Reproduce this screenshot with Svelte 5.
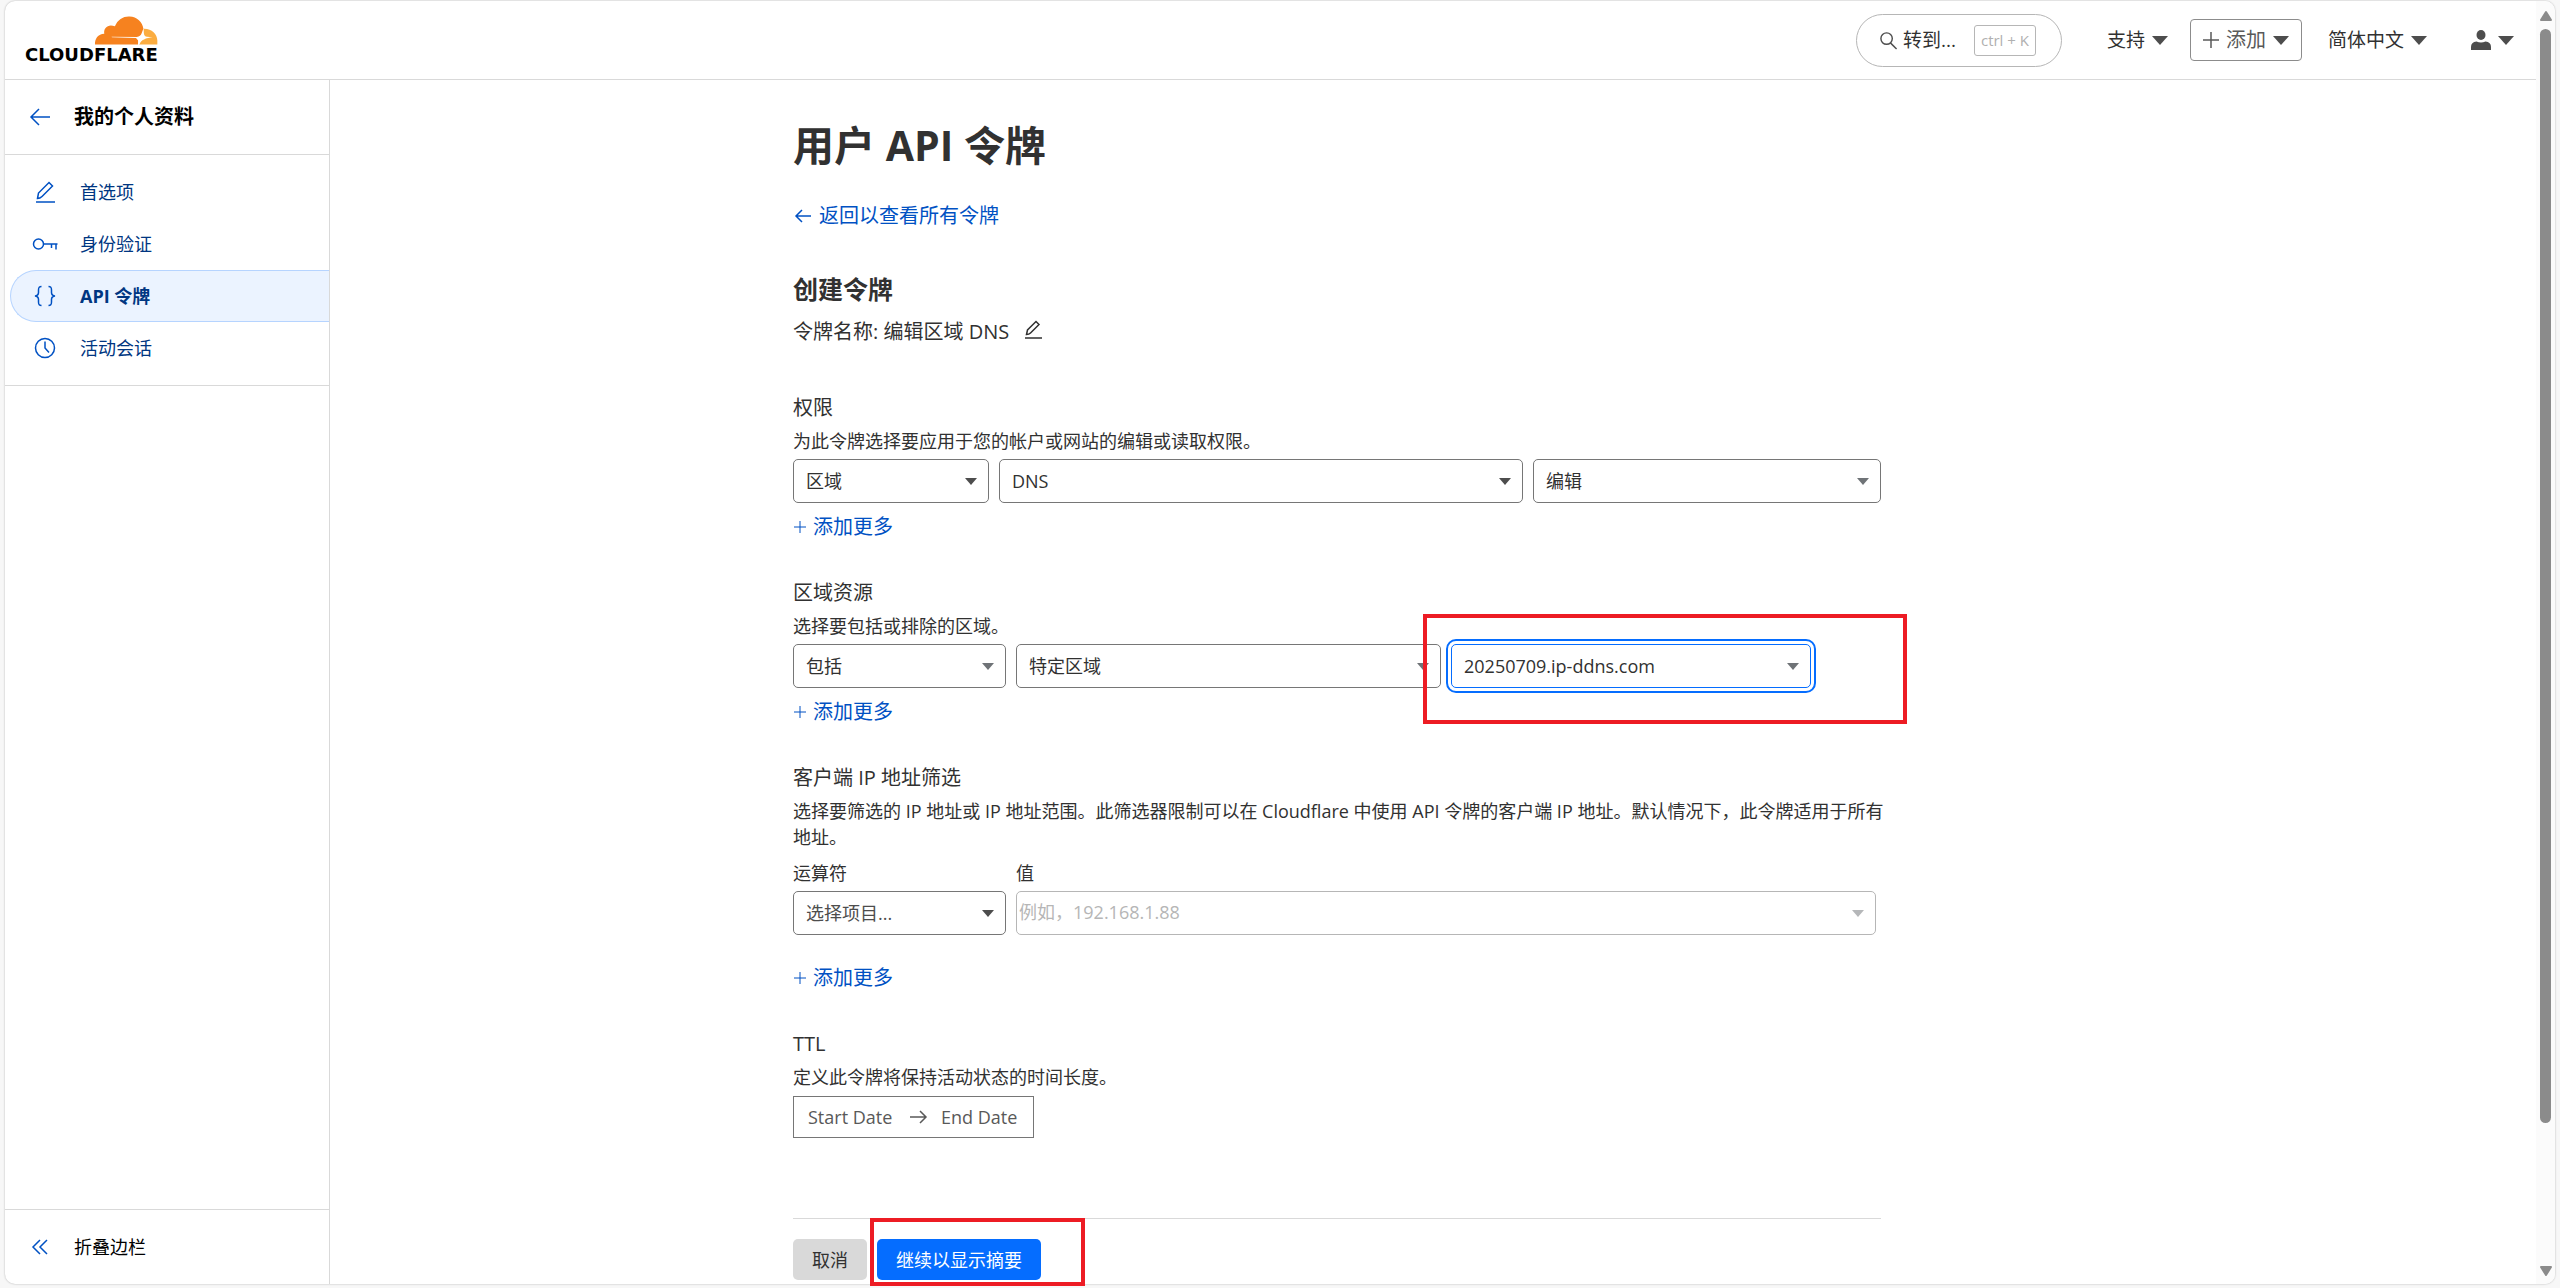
<script lang="ts">
  const navItems = [
    { id: 'preferences', label: '首选项', icon: 'edit' },
    { id: 'auth', label: '身份验证', icon: 'key' },
    { id: 'tokens', label: 'API 令牌', icon: 'braces' },
    { id: 'sessions', label: '活动会话', icon: 'clock' },
  ];

  let active = $state('tokens');
  let ipValue = $state('');
  let startDate = $state('');
  let endDate = $state('');
</script>

{#snippet caret(size: 'small' | 'large')}
  <svg class="caret {size}" viewBox="0 0 16 10" preserveAspectRatio="none" aria-hidden="true">
    <path d="M0 0h16L8 10z" fill="currentColor" />
  </svg>
{/snippet}

{#snippet icon(name: string)}
  <svg class="icon" viewBox="0 0 28 28" aria-hidden="true">
    {#if name === 'edit'}
      <path d="M5 24h19M6.500 20.500l1-5.500L18 4.500l3.500 3.500L11 18.500q-2 2-4.500 2z" />
    {:else if name === 'key'}
      <circle cx="7.500" cy="14" r="5" />
      <path d="M12.500 14H26.500M20.500 14v4M25 14v5.500" />
    {:else if name === 'braces'}
      <path
        d="M10.500 4.500C7.500 4.500 7.500 6 7.500 8v2.500q0 3-3.500 3.500q3.500.5 3.500 3.500V20c0 2 0 3.500 3 3.500M17.500 4.500c3 0 3 1.500 3 3.500v2.500q0 3 3.500 3.500q-3.500.5-3.500 3.500V20c0 2 0 3.500-3 3.500"
      />
    {:else if name === 'clock'}
      <circle cx="14" cy="14" r="9.500" />
      <path d="M14 7.500V14l4 4.500" />
    {/if}
  </svg>
{/snippet}

{#snippet addMore()}
  <button class="add-more" type="button">
    <svg viewBox="0 0 14 14" aria-hidden="true"><path d="M7 1v12M1 7h12" /></svg>
    添加更多
  </button>
{/snippet}

<div class="frame">
  <div class="page">
    <header class="topbar">
      <a class="logo" href="#home" aria-label="Cloudflare">
        <svg viewBox="283 44 190 87" aria-hidden="true">
          <path
            fill="#f6821f"
            d="M283 130c-1-18 9-32 28-33c-3-18 13-31 32-22c8-21 26-31 44-30c23 1 39 17 42 37c-1 7-1 12-4 18c-4 7-10 10-18 10l6 8v12z"
          />
          <path fill="#fbad41" d="M430 82c23-1 41 15 41 36v12h-55c1-10 6-14 8-20c4-8 5-20 6-28z" />
          <path
            fill="#fff"
            d="M333 106l76 1c8-1 12-4 15-12q3-9 5-13l1 12c1 8 4 12 10 12l17 2c-20 2-36 8-40 22h-4l1-9q0-10-8-11l-72-2z"
          />
        </svg>
        <span>CLOUDFLARE</span>
      </a>

      <div class="actions">
        <button class="search" type="button">
          <svg viewBox="0 0 20 20" aria-hidden="true">
            <circle cx="8" cy="8" r="6" />
            <path d="M12 12.500l6.500 6.500" />
          </svg>
          <span>转到...</span>
          <kbd>ctrl + K</kbd>
        </button>
        <button class="menu support" type="button">支持{@render caret('large')}</button>
        <button class="menu add" type="button">
          <svg class="plus" viewBox="0 0 16 16" aria-hidden="true"><path d="M8 0v16M0 8h16" /></svg>
          添加{@render caret('large')}
        </button>
        <button class="menu language" type="button">简体中文{@render caret('large')}</button>
        <button class="menu account" type="button" aria-label="账户">
          <svg class="user" viewBox="0 0 20 20" aria-hidden="true">
            <ellipse cx="10" cy="5" rx="4.500" ry="5" />
            <path d="M0 20v-3q0-5 5.500-5.500q4.500 2 9 0q5.500.5 5.500 5.500v3z" />
          </svg>
          {@render caret('large')}
        </button>
      </div>
    </header>

    <div class="body">
      <aside class="sidebar">
        <a class="profile" href="#account">
          <svg viewBox="0 0 20 18" aria-hidden="true"><path d="M20 9H1M9 1L1 9l8 8" /></svg>
          我的个人资料
        </a>
        <nav>
          {#each navItems as item (item.id)}
            <a
              href="#{item.id}"
              class:active={active === item.id}
              onclick={() => (active = item.id)}
            >
              {@render icon(item.icon)}
              {item.label}
            </a>
          {/each}
        </nav>
        <button class="collapse" type="button">
          <svg viewBox="0 0 16 16" aria-hidden="true"><path d="M8 1L1 8l7 7M15 1L8 8l7 7" /></svg>
          折叠边栏
        </button>
      </aside>

      <main>
        <div class="container">
          <h1>用户 API 令牌</h1>
          <a class="back" href="#tokens">
            <svg viewBox="0 0 16 14" aria-hidden="true"><path d="M16 7H1M7 1L1 7l6 6" /></svg>
            返回以查看所有令牌
          </a>

          <form onsubmit={(e) => e.preventDefault()}>
            <h2>创建令牌</h2>
            <div class="token-name">
              令牌名称: 编辑区域 DNS
              <button type="button" aria-label="编辑名称">
                <svg viewBox="0 0 17 19" aria-hidden="true">
                  <path d="M0 18h17M1.500 14.500l1-4.500L11 1.500L14 4.500L5.500 13q-1.500 1.500-4 1.500z" />
                </svg>
              </button>
            </div>

            <section>
              <h3>权限</h3>
              <p>为此令牌选择要应用于您的帐户或网站的编辑或读取权限。</p>
              <div class="row permissions">
                <div class="field">
                  <select aria-label="权限类别"><option>区域</option></select>
                  {@render caret('small')}
                </div>
                <div class="field">
                  <select aria-label="权限项目"><option>DNS</option></select>
                  {@render caret('small')}
                </div>
                <div class="field light">
                  <select aria-label="访问级别"><option>编辑</option></select>
                  {@render caret('small')}
                </div>
              </div>
              {@render addMore()}
            </section>

            <section>
              <h3>区域资源</h3>
              <p>选择要包括或排除的区域。</p>
              <div class="row resources">
                <div class="field light">
                  <select aria-label="包括或排除"><option>包括</option></select>
                  {@render caret('small')}
                </div>
                <div class="field light">
                  <select aria-label="区域范围"><option>特定区域</option></select>
                  {@render caret('small')}
                </div>
                <div class="field light focused">
                  <select aria-label="区域名称"><option>20250709.ip-ddns.com</option></select>
                  {@render caret('small')}
                  <div class="mark zone-mark"></div>
                </div>
              </div>
              {@render addMore()}
            </section>

            <section class="ip-filter">
              <h3>客户端 IP 地址筛选</h3>
              <p>
                选择要筛选的 IP 地址或 IP 地址范围。此筛选器限制可以在 Cloudflare 中使用 API
                令牌的客户端 IP 地址。默认情况下，此令牌适用于所有地址。
              </p>
              <div class="row filter">
                <div>
                  <label for="operator">运算符</label>
                  <div class="field">
                    <select id="operator" class="muted"><option>选择项目...</option></select>
                    {@render caret('small')}
                  </div>
                </div>
                <div>
                  <label for="ip-value">值</label>
                  <div class="field disabled">
                    <input
                      id="ip-value"
                      type="text"
                      placeholder="例如，192.168.1.88"
                      bind:value={ipValue}
                      disabled
                    />
                    {@render caret('small')}
                  </div>
                </div>
              </div>
              {@render addMore()}
            </section>

            <section>
              <h3>TTL</h3>
              <p>定义此令牌将保持活动状态的时间长度。</p>
              <div class="dates">
                <input type="text" placeholder="Start Date" aria-label="Start Date" bind:value={startDate} />
                <svg viewBox="0 0 17 14" aria-hidden="true"><path d="M0 7h16M10 1l6 6l-6 6" /></svg>
                <input type="text" placeholder="End Date" aria-label="End Date" bind:value={endDate} />
              </div>
            </section>

            <div class="form-actions">
              <button class="cancel" type="button">取消</button>
              <div class="submit-wrap">
                <button class="submit" type="submit">继续以显示摘要</button>
                <div class="mark submit-mark"></div>
              </div>
            </div>
          </form>
        </div>
      </main>
    </div>
  </div>

  <div class="scrollbar" aria-hidden="true">
    <svg viewBox="0 0 12 10"><path d="M6 1L11 9H1z" /></svg>
    <div class="track"><div class="thumb"></div></div>
    <svg viewBox="0 0 12 10"><path d="M6 9L11 1H1z" /></svg>
  </div>
</div>

<style>
  :global(body) {
    margin: 0;
    background: #f7f7f7;
    overflow: hidden;
  }

  .frame {
    --blue: #0051c3;
    --text: #313131;
    --line: #d9d9d9;
    display: flex;
    box-sizing: border-box;
    height: calc(100vh - 5px);
    margin: 1px 5px 4px;
    background: #fff;
    border-radius: 10px;
    box-shadow: 0 0 2px rgba(0, 0, 0, 0.3);
    color: var(--text);
    font-family: 'Open Sans', 'Noto Sans CJK SC', sans-serif;
    font-size: 18px;
    line-height: 26px;
  }

  .frame :global(*) {
    box-sizing: border-box;
  }

  svg {
    display: block;
    flex: none;
    overflow: visible;
  }

  a {
    color: inherit;
    text-decoration: none;
  }

  button,
  input,
  select {
    margin: 0;
    font: inherit;
    color: inherit;
  }

  button {
    padding: 0;
    border: 0;
    background: none;
    cursor: pointer;
  }

  .page {
    flex: 1;
    min-width: 0;
    display: flex;
    flex-direction: column;
  }

  /* Top bar */
  .topbar {
    display: flex;
    align-items: center;
    justify-content: space-between;
    height: 79px;
    flex: none;
    padding: 0 22px 0 20px;
    border-bottom: 1px solid var(--line);
  }

  .logo {
    display: flex;
    flex-direction: column;
    align-items: flex-end;
    color: #000;
    font-family: 'DejaVu Sans', sans-serif;
    font-size: 18px;
    font-weight: 700;
    line-height: 20px;
  }

  .logo svg {
    width: 63px;
    height: 29px;
  }

  .actions {
    display: flex;
    align-items: center;
    font-size: 19px;
  }

  .search {
    display: flex;
    align-items: center;
    height: 53px;
    padding: 0 25px 0 22px;
    border: 1px solid #b6b6b6;
    border-radius: 27px;
  }

  .search svg {
    width: 19px;
    height: 19px;
    margin-right: 5px;
    fill: none;
    stroke: #4d4d4d;
    stroke-width: 1.5;
  }

  .search kbd {
    height: 31px;
    margin-left: 18px;
    padding: 0 6px;
    border: 1px solid #b6b6b6;
    border-radius: 3px;
    color: #b0b0b0;
    font-family: inherit;
    font-size: 15px;
    line-height: 29px;
  }

  .menu {
    display: flex;
    align-items: center;
  }

  .menu .caret {
    margin-left: 7px;
    color: #4d4d4d;
  }

  .support {
    margin-left: 45px;
  }

  .add {
    height: 42px;
    margin: 0 26px 0 22px;
    padding: 0 12px;
    border: 1px solid #8c8c8c;
    border-radius: 4px;
    color: #595959;
    font-size: 20px;
  }

  .plus {
    width: 16px;
    height: 16px;
    margin-right: 7px;
    stroke: #595959;
    stroke-width: 1.5;
  }

  .account {
    margin-left: 44px;
  }

  .user {
    width: 20px;
    height: 20px;
    fill: #4d4d4d;
  }

  .caret.large {
    width: 16px;
    height: 9px;
  }

  .caret.small {
    width: 12px;
    height: 7px;
  }

  /* Sidebar */
  .body {
    flex: 1;
    min-height: 0;
    display: flex;
  }

  .sidebar {
    display: flex;
    flex-direction: column;
    width: 325px;
    flex: none;
    border-right: 1px solid var(--line);
  }

  .sidebar svg {
    fill: none;
    stroke: var(--blue);
    stroke-width: 1.5;
  }

  .profile {
    display: flex;
    align-items: center;
    gap: 24px;
    height: 75px;
    padding-left: 25px;
    border-bottom: 1px solid var(--line);
    color: #000;
    font-size: 20px;
    font-weight: 700;
  }

  .profile svg {
    width: 20px;
    height: 18px;
  }

  nav {
    padding: 11px 0 11px 5px;
    border-bottom: 1px solid var(--line);
  }

  nav a {
    display: flex;
    align-items: center;
    gap: 21px;
    height: 52px;
    padding-left: 20px;
    border: 1px solid transparent;
    border-right: 0;
    border-radius: 26px 0 0 26px;
    color: #003681;
  }

  nav a.active {
    background: #ebf3ff;
    border-color: #b6d4ff;
    font-weight: 700;
  }

  nav .icon {
    width: 28px;
    height: 28px;
  }

  .collapse {
    display: flex;
    align-items: center;
    gap: 26px;
    height: 75px;
    margin-top: auto;
    padding-left: 27px;
    border-top: 1px solid var(--line);
    color: #000;
  }

  .collapse svg {
    width: 16px;
    height: 16px;
  }

  /* Content */
  main {
    flex: 1;
    min-width: 0;
  }

  .container {
    max-width: 1280px;
    margin: 0 auto;
    padding-top: 40px;
  }

  form {
    width: 85%;
  }

  h1,
  h2,
  h3,
  p {
    margin: 0;
  }

  h1 {
    font-size: 41px;
    line-height: 50px;
  }

  .back {
    display: flex;
    align-items: center;
    gap: 8px;
    margin: 31px 0 42px;
    padding-left: 2px;
    color: var(--blue);
    font-size: 20px;
    line-height: 30px;
  }

  .back svg {
    width: 16px;
    height: 14px;
    fill: none;
    stroke: currentColor;
    stroke-width: 1.5;
  }

  h2 {
    font-size: 25px;
    line-height: 32px;
  }

  .token-name {
    display: flex;
    align-items: center;
    gap: 16px;
    margin: 12px 0 46px;
    font-size: 20px;
    line-height: 30px;
  }

  .token-name button {
    padding-bottom: 5px;
  }

  .token-name svg {
    width: 17px;
    height: 19px;
    fill: none;
    stroke: var(--text);
    stroke-width: 1.5;
  }

  section {
    margin-bottom: 36px;
  }

  h3 {
    margin-bottom: 5px;
    font-size: 20px;
    font-weight: 400;
    line-height: 30px;
  }

  .ip-filter p {
    margin-right: -8px;
  }

  .row {
    display: grid;
    gap: 10px;
    margin-top: 5px;
  }

  .permissions {
    grid-template-columns: 196fr 524fr 348fr;
  }

  .resources {
    grid-template-columns: 213fr 425fr 360fr 60fr;
  }

  .filter {
    grid-template-columns: 213fr 860fr;
    margin: 10px 5px 28px 0;
  }

  .filter label {
    display: block;
    margin-bottom: 5px;
  }

  .field {
    position: relative;
  }

  .field select,
  .field input {
    display: block;
    width: 100%;
    height: 44px;
    padding: 0 36px 0 12px;
    border: 1px solid #767676;
    border-radius: 5px;
    background: #fff;
    appearance: none;
    outline: 0;
  }

  .field .caret {
    position: absolute;
    top: 19px;
    right: 12px;
    color: #4d4d4d;
    pointer-events: none;
  }

  .field.light .caret {
    color: #6f7377;
  }

  .field.focused select {
    border-color: #056dff;
    outline: 2px solid #056dff;
    outline-offset: 3px;
  }

  .field select.muted {
    color: #4d4d4d;
  }

  .field.disabled input {
    padding: 0 36px 2px 2px;
    border-color: #b6b6b6;
  }

  .field.disabled .caret {
    color: #b5b7b9;
  }

  input::placeholder {
    color: #b6b6b6;
    opacity: 1;
  }

  .add-more {
    display: flex;
    align-items: center;
    gap: 6px;
    margin-top: 9px;
    color: var(--blue);
    font-size: 20px;
    line-height: 30px;
  }

  .add-more svg {
    width: 14px;
    height: 14px;
    stroke: currentColor;
  }

  .dates {
    display: inline-flex;
    align-items: center;
    gap: 14px;
    height: 42px;
    margin-top: 6px;
    padding: 0 14px;
    border: 1px solid #767676;
  }

  .dates input {
    width: 88px;
    padding: 0;
    border: 0;
    background: none;
    outline: 0;
  }

  .dates input:last-child {
    width: 78px;
  }

  .dates input::placeholder {
    color: #595959;
  }

  .dates svg {
    width: 17px;
    height: 14px;
    fill: none;
    stroke: #595959;
    stroke-width: 1.5;
  }

  .form-actions {
    display: flex;
    gap: 10px;
    margin-top: 80px;
    padding-top: 20px;
    border-top: 1px solid var(--line);
  }

  .cancel,
  .submit {
    display: block;
    height: 41px;
    padding: 0 19px;
    border-radius: 5px;
    background: #d9d9d9;
  }

  .submit {
    background: #056dff;
    color: #fff;
  }

  .submit-wrap {
    position: relative;
  }

  /* Red highlight boxes drawn over the form */
  .mark {
    position: absolute;
    border: 4px solid #ed1c24;
    pointer-events: none;
  }

  .zone-mark {
    inset: -30px -96px -36px -28px;
  }

  .submit-mark {
    inset: -21px -44px -6px -7px;
  }

  /* Scrollbar */
  .scrollbar {
    display: flex;
    flex-direction: column;
    align-items: center;
    gap: 8px;
    width: 19px;
    flex: none;
    padding: 10px 0 8px;
    border-radius: 0 10px 10px 0;
    background: #fbfbfb;
  }

  .scrollbar svg {
    width: 12px;
    height: 10px;
    fill: #8b8b8b;
    stroke: #8b8b8b;
    stroke-width: 2;
    stroke-linejoin: round;
  }

  .track {
    flex: 1;
    width: 11px;
  }

  .thumb {
    height: 89%;
    border-radius: 6px;
    background: #8b8b8b;
  }
</style>
